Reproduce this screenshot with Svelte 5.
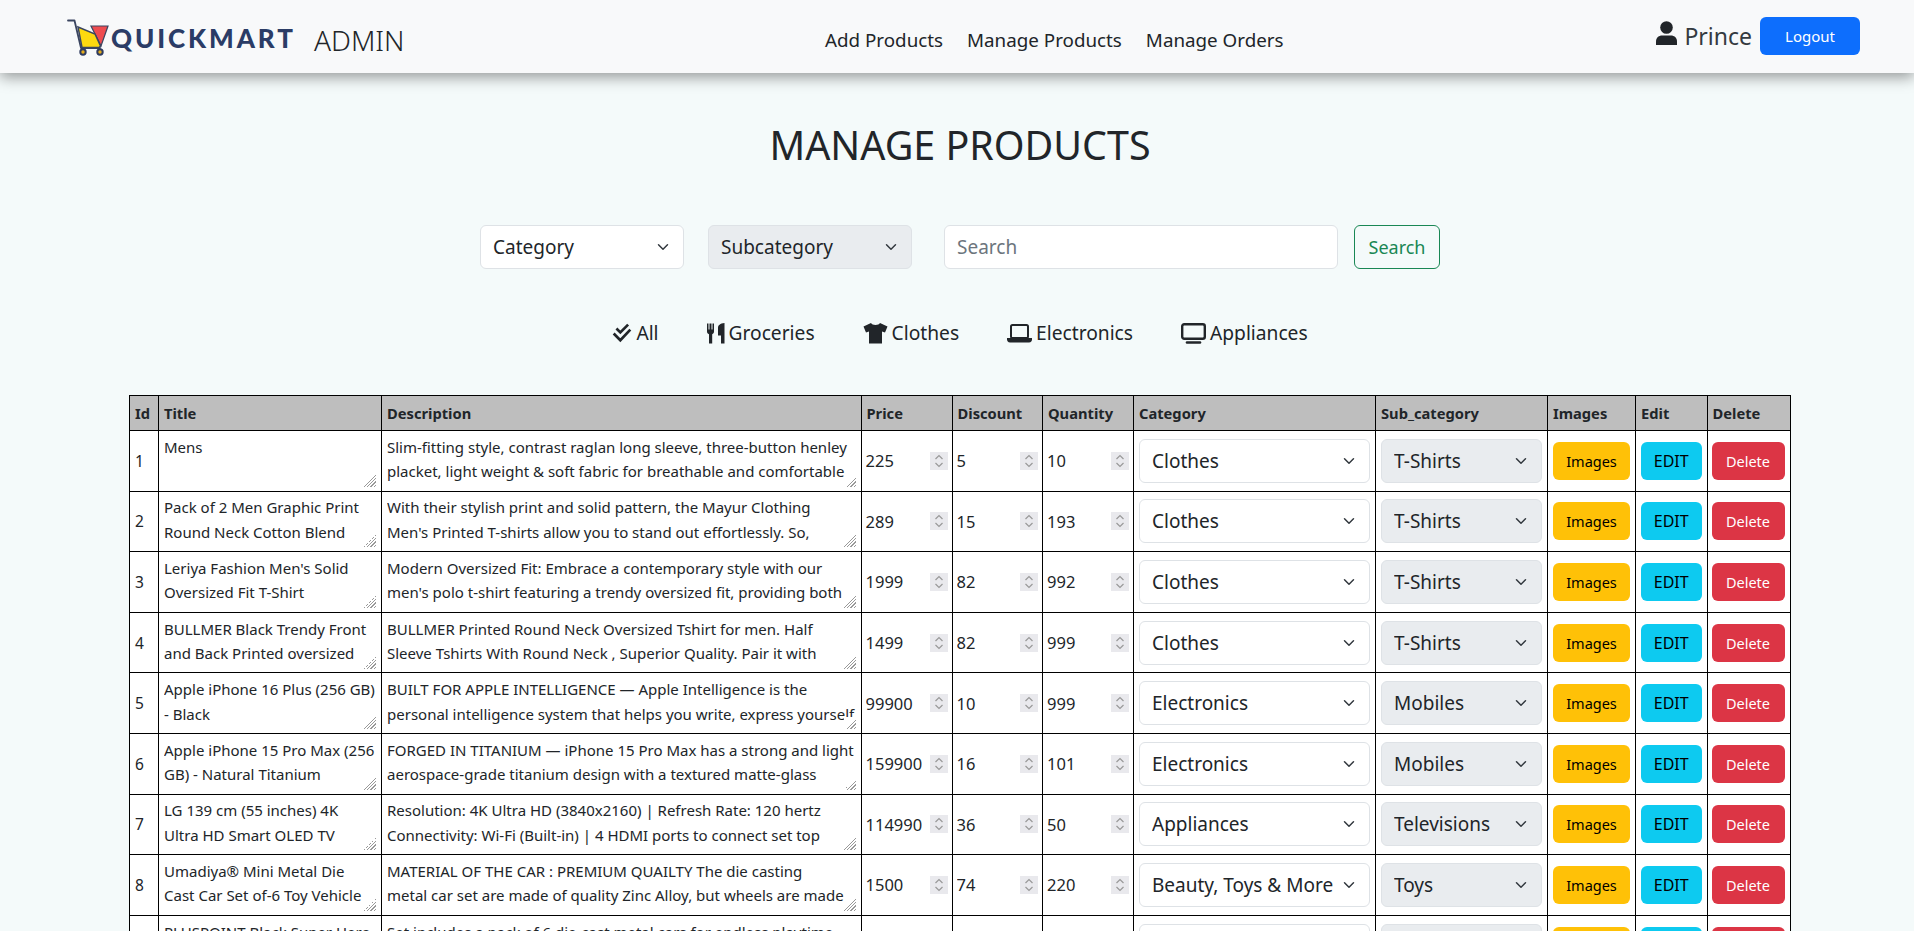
<script>
  const rows = [
    [1, 'Mens', 'Slim-fitting style, contrast raglan long sleeve, three-button henley\nplacket, light weight & soft fabric for breathable and comfortable\nwearing. And Solid stitched shirts with round neck', 225, 5, 10, 'Clothes', 'T-Shirts'],
    [2, 'Pack of 2 Men Graphic Print\nRound Neck Cotton Blend\nT-Shirt', "With their stylish print and solid pattern, the Mayur Clothing\nMen's Printed T-shirts allow you to stand out effortlessly. So,\ngrab this pack today and look your best", 289, 15, 193, 'Clothes', 'T-Shirts'],
    [3, "Leriya Fashion Men's Solid\nOversized Fit T-Shirt", "Modern Oversized Fit: Embrace a contemporary style with our\nmen's polo t-shirt featuring a trendy oversized fit, providing both\ncomfort and fashion-forward appeal", 1999, 82, 992, 'Clothes', 'T-Shirts'],
    [4, 'BULLMER Black Trendy Front\nand Back Printed oversized\nT-shirt', 'BULLMER Printed Round Neck Oversized Tshirt for men. Half\nSleeve Tshirts With Round Neck , Superior Quality. Pair it with\njeans or shorts for a casual look', 1499, 82, 999, 'Clothes', 'T-Shirts'],
    [5, 'Apple iPhone 16 Plus (256 GB)\n- Black', 'BUILT FOR APPLE INTELLIGENCE — Apple Intelligence is the\npersonal intelligence system that helps you write, express yourself\nand get things done effortlessly', 99900, 10, 999, 'Electronics', 'Mobiles'],
    [6, 'Apple iPhone 15 Pro Max (256\nGB) - Natural Titanium', 'FORGED IN TITANIUM — iPhone 15 Pro Max has a strong and light\naerospace-grade titanium design with a textured matte-glass\nback and Ceramic Shield front', 159900, 16, 101, 'Electronics', 'Mobiles'],
    [7, 'LG 139 cm (55 inches) 4K\nUltra HD Smart OLED TV', 'Resolution: 4K Ultra HD (3840x2160) | Refresh Rate: 120 hertz\nConnectivity: Wi-Fi (Built-in) | 4 HDMI ports to connect set top\nbox, Blu-ray players, gaming console', 114990, 36, 50, 'Appliances', 'Televisions'],
    [8, 'Umadiya® Mini Metal Die\nCast Car Set of-6 Toy Vehicle\nSet', 'MATERIAL OF THE CAR : PREMIUM QUAILTY The die casting\nmetal car set are made of quality Zinc Alloy, but wheels are made\nof plastic for smooth running', 1500, 74, 220, 'Beauty, Toys & More', 'Toys'],
    [9, 'PLUSPOINT Black Super Hero\nDie Cast Cars', 'Set includes a pack of 6 die-cast metal cars for endless playtime\nand collecting fun for kids of all ages', 999, 50, 300, 'Beauty, Toys & More', 'Toys'],
  ];
  const categories = ['Clothes', 'Electronics', 'Appliances', 'Groceries', 'Beauty, Toys & More'];
  const subs = ['T-Shirts', 'Mobiles', 'Televisions', 'Toys'];
  const colWidths = [29, 223, 479.5, 91, 90.5, 91, 242, 172, 88, 71.5, 83];
  const headers = ['Id', 'Title', 'Description', 'Price', 'Discount', 'Quantity', 'Category', 'Sub_category', 'Images', 'Edit', 'Delete'];
</script>

<div class="page">
  <nav class="navbar">
    <div class="brand">
      <svg class="cart" width="44" height="37" viewBox="0 0 44 37">
        <path d="M1 1.500h6.500l6.500 27.500h19" fill="none" stroke="#3a4560" stroke-width="1.800" stroke-linecap="round" stroke-linejoin="round"/>
        <path d="M24 7h17l-7 20z" fill="#ee4c50" stroke="#3a4560" stroke-width="1.200"/>
        <path d="M11 8l17 7 5.500 12-1.500 1.500H15z" fill="#fdd90f" stroke="#3a4560" stroke-width="1.500"/>
        <circle cx="16" cy="33" r="2.700" fill="#e6ac1a" stroke="#2f3c60" stroke-width="2"/>
        <circle cx="33" cy="33" r="2.700" fill="#e6ac1a" stroke="#2f3c60" stroke-width="2"/>
      </svg>
      <span class="logo-text">QUICKMART</span>
    </div>
    <span class="admin">ADMIN</span>
    <div class="nav-links">
      <a href="#add">Add Products</a>
      <a href="#manage">Manage Products</a>
      <a href="#orders">Manage Orders</a>
    </div>
    <div class="user">
      <svg width="21" height="24" viewBox="0 0 21 24" fill="#212529"><circle cx="10.500" cy="6.500" r="6.300"/><path d="M0 24v-3.500C0 16.500 3 14.500 6 14.500h9c3 0 6 2 6 6V24z"/></svg>
      <span class="user-name">Prince</span>
      <button class="btn logout">Logout</button>
    </div>
  </nav>

  <main>
    <h1>MANAGE PRODUCTS</h1>

    <div class="filters">
      <select class="form-select cat"><option>Category</option></select>
      <select class="form-select sub disabled" disabled><option>Subcategory</option></select>
      <input class="search" type="text" placeholder="Search" />
      <button class="btn search-btn">Search</button>
    </div>

    <div class="tabs">
      <span class="tab">
        <svg width="20" height="20" viewBox="0 0 18 18" fill="none" stroke="#212529" stroke-width="2.400"><path d="M4 5l3.500 3.500L14.500 1.500"/><path d="M1.500 9.500l6 6L16.500 6"/></svg>
        All
      </span>
      <span class="tab">
        <svg width="18" height="21" viewBox="0 0 18 21" fill="#212529"><path d="M0 .5h1.500v6h1v-6h2v6h1v-6H7v8c0 1.500-.8 2.300-1.800 2.700V20.500H2v-9.300C.8 10.800 0 10 0 8.500z"/><path d="M11 12.500V5c0-2.800 2-4.500 6.500-5v20.500H14v-8z"/></svg>
        Groceries
      </span>
      <span class="tab">
        <svg width="25" height="22" viewBox="0 0 25 22" fill="#212529"><path d="M8 1 .5 4.500l2.500 6 3-1V21.500h13V9.500l3 1 2.500-6L17 1c-1 2.500-8 2.500-9 0z"/></svg>
        Clothes
      </span>
      <span class="tab">
        <svg width="25" height="19" viewBox="0 0 25 19" fill="none" stroke="#212529"><rect x="4" y="1" width="17" height="13" rx="1.500" stroke-width="2"/><path d="M0 14h25v1.500c0 1.500-1 3-3 3H3c-2 0-3-1.500-3-3z" fill="#212529" stroke="none"/></svg>
        Electronics
      </span>
      <span class="tab">
        <svg width="25" height="21" viewBox="0 0 25 21" fill="none" stroke="#212529"><rect x="1.200" y="1.200" width="22.600" height="14.600" rx="2" stroke-width="2.400"/><path d="M6 19.500h13" stroke-width="2.600" stroke-linecap="round"/></svg>
        Appliances
      </span>
    </div>

    <table>
      <colgroup>
        {#each colWidths as w}
          <col style="width: {w}px" />
        {/each}
      </colgroup>
      <thead>
        <tr>
          {#each headers as h}
            <th>{h}</th>
          {/each}
        </tr>
      </thead>
      <tbody>
        {#each rows as r}
          <tr>
            <td>{r[0]}</td>
            <td><textarea rows="2" wrap="off" value={r[1]}></textarea></td>
            <td><textarea rows="2" wrap="off" value={r[2]}></textarea></td>
            <td><input class="num" type="number" value={r[3]} /></td>
            <td><input class="num" type="number" value={r[4]} /></td>
            <td><input class="num" type="number" value={r[5]} /></td>
            <td>
              <select class="form-select cell" value={r[6]}>
                {#each categories as c}<option>{c}</option>{/each}
              </select>
            </td>
            <td>
              <select class="form-select cell disabled" value={r[7]}>
                {#each subs as s}<option>{s}</option>{/each}
              </select>
            </td>
            <td><button class="btn images">Images</button></td>
            <td><button class="btn edit">EDIT</button></td>
            <td><button class="btn del">Delete</button></td>
          </tr>
        {/each}
      </tbody>
    </table>
  </main>
</div>

<style>
  :global(body) {
    margin: 0;
    background: #f4fafa;
    color: #212529;
    font-family: "Noto Sans", sans-serif;
  }
  .page {
    height: 100vh;
    overflow: hidden;
  }
  .navbar {
    display: flex;
    align-items: center;
    height: 73px;
    background: #f8f9fa;
    box-shadow: 0 4px 14px rgba(0, 0, 0, 0.4);
    padding: 0 0 0 67px;
    position: relative;
  }
  .brand {
    display: flex;
    align-items: center;
    width: 226px;
  }
  .cart {
    flex: none;
    margin-top: 2px;
  }
  .logo-text {
    font-family: "Lato", sans-serif;
    font-weight: 900;
    font-size: 26px;
    letter-spacing: 2.900px;
    color: #2b3c66;
    margin-top: 2px;
    white-space: nowrap;
  }
  .admin {
    font-size: 28px;
    font-weight: 300;
    margin-left: 21px;
    width: 511px;
    margin-top: 6px;
    color: #212529;
  }
  .nav-links {
    display: flex;
    gap: 24px;
    margin-top: 6px;
  }
  .nav-links a {
    color: #212529;
    font-size: 18.800px;
    text-decoration: none;
  }
  .user {
    display: flex;
    align-items: center;
    margin-left: auto;
    margin-right: 54px;
    margin-top: -1px;
  }
  .user svg {
    margin-right: 7px;
    margin-top: -6px;
  }
  .user-name {
    font-size: 23px;
    color: #343a40;
    margin-right: 8px;
  }
  .btn {
    font-family: inherit;
    border: 1px solid transparent;
    border-radius: 6px;
    font-size: 16px;
    cursor: pointer;
    height: 38px;
    padding: 0 8px;
  }
  .logout {
    background: #0d6efd;
    color: #fff;
    width: 100px;
    font-size: 15px;
  }
  main {
    padding-top: 48px;
  }
  h1 {
    margin: 0;
    padding-left: 6px;
    text-align: center;
    font-size: 39.400px;
    font-weight: 400;
    line-height: 48px;
  }
  .filters {
    display: flex;
    align-items: center;
    justify-content: center;
    margin-top: 56px;
    padding-left: 6px;
  }
  .form-select {
    appearance: none;
    font-family: inherit;
    font-size: 19px;
    color: #212529;
    background-color: #fff;
    background-image: url("data:image/svg+xml,%3csvg xmlns='http://www.w3.org/2000/svg' viewBox='0 0 16 16'%3e%3cpath fill='none' stroke='%23343a40' stroke-linecap='round' stroke-linejoin='round' stroke-width='2' d='m2 5 6 6 6-6'/%3e%3c/svg%3e");
    background-repeat: no-repeat;
    background-position: right 12px center;
    background-size: 16px 12px;
    border: 1px solid #dee2e6;
    border-radius: 6px;
    padding: 0 36px 0 12px;
    height: 44px;
    box-sizing: border-box;
  }
  .disabled {
    background-color: #e9ecef;
    opacity: 1;
  }
  .cat, .sub {
    width: 204px;
  }
  .cat {
    margin-right: 24px;
  }
  .sub {
    margin-right: 32px;
  }
  .sub:disabled {
    color: #212529;
  }
  .search {
    width: 394px;
    height: 44px;
    box-sizing: border-box;
    border: 1px solid #dee2e6;
    border-radius: 6px;
    padding: 0 12px;
    font-family: inherit;
    font-size: 19px;
    background: #fff;
  }
  .search::placeholder {
    color: #6c757d;
  }
  .search-btn {
    background: transparent;
    border-color: #198754;
    color: #198754;
    height: 44px;
    width: 86px;
    margin-left: 16px;
    font-size: 18px;
  }
  .tabs {
    display: flex;
    justify-content: center;
    gap: 48px;
    margin-top: 50px;
    padding-left: 6px;
  }
  .tab {
    display: flex;
    align-items: center;
    gap: 4px;
    font-size: 19.200px;
    line-height: 28px;
  }
  table {
    table-layout: fixed;
    border-collapse: collapse;
    width: 1661px;
    margin: 48px 0 0 129px;
    background: #fff;
    font-size: 15.500px;
  }
  th, td {
    border: 1px solid #000;
    padding: 0 5px;
    vertical-align: middle;
    box-sizing: border-box;
  }
  th {
    background: #bebebe;
    text-align: left;
    font-weight: 700;
    font-size: 14.700px;
    height: 35px;
  }
  td {
    height: 60.600px;
  }
  textarea {
    display: block;
    width: 100%;
    height: 52px;
    box-sizing: border-box;
    border: 0;
    outline: 0;
    padding: 0;
    font-family: inherit;
    font-size: 15px;
    line-height: 24.400px;
    color: #212529;
    overflow: hidden;
    background: transparent;
  }
  textarea::-webkit-resizer {
    background:
      linear-gradient(135deg, #fff 50%, transparent 50%) right bottom / 12px 12px no-repeat,
      repeating-linear-gradient(135deg, #999 0 1px, #fff 1px 2.500px) right bottom / 12px 12px no-repeat;
  }
  .num {
    display: block;
    width: calc(100% + 2px);
    height: 24px;
    margin-left: -1px;
    border: 0;
    outline: 0;
    padding: 0;
    font-family: inherit;
    font-size: 16.500px;
    color: #212529;
    background: transparent;
    box-sizing: border-box;
  }
  .num::-webkit-inner-spin-button {
    appearance: none;
    opacity: 1;
    width: 18px;
    height: 18px;
    align-self: center;
    background-color: #e9e9ed;
    background-image: url("data:image/svg+xml,%3csvg xmlns='http://www.w3.org/2000/svg' viewBox='0 0 18 18'%3e%3cpath fill='none' stroke='%23999' stroke-width='1.200' d='m5.500 7 3.500-3.500L12.500 7M5.500 11l3.500 3.500 3.500-3.500'/%3e%3c/svg%3e");
    background-repeat: no-repeat;
  }
  .cell {
    width: 100%;
    display: block;
  }
  .images, .edit, .del {
    width: 100%;
    font-size: 14.500px;
    padding: 0;
    display: block;
  }
  .images {
    background: #ffc107;
    color: #000;
  }
  .edit {
    background: #0dcaf0;
    color: #000;
    font-size: 16px;
  }
  .del {
    background: #dc3545;
    color: #fff;
    width: calc(100% + 1px);
    margin-left: -1px;
  }
</style>
